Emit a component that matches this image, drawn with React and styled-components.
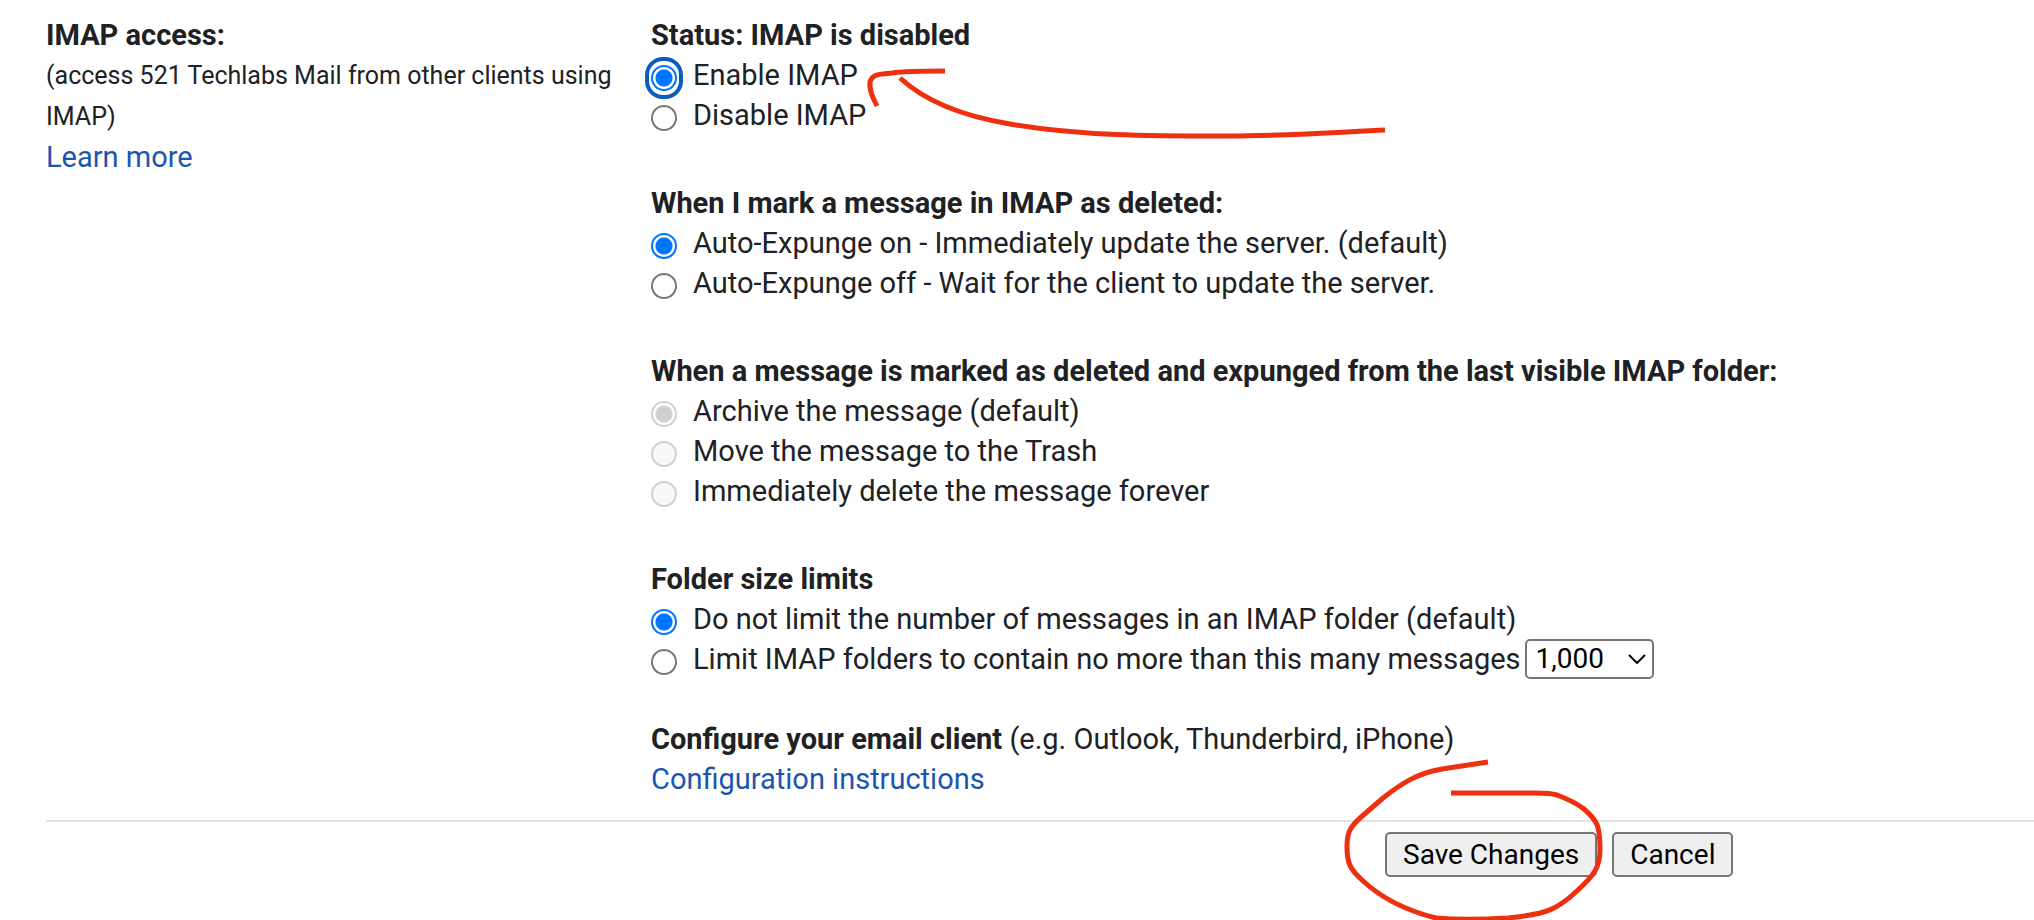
import React, { useState } from 'react';
import styled, { createGlobalStyle } from 'styled-components';

const Option = ({ name, value, selected, onSelect, disabled, autoFocus, children }) => (
  <Row>
    <label>
      <Radio
        type='radio'
        name={name}
        value={value}
        checked={selected === value}
        onChange={() => onSelect && onSelect(value)}
        disabled={disabled}
        autoFocus={autoFocus}
      />
      {children}
    </label>
  </Row>
)

const App = () => {

  const [access, setAccess] = useState('enable');
  const [expunge, setExpunge] = useState('on');
  const [limit, setLimit] = useState('none');

  return (
    <Page>
      <GlobalStyle />
      <Settings>
        <Side>
          <Title>IMAP access:</Title>
          <Hint>(access 521 Techlabs Mail from other clients using IMAP)</Hint>
          <Link href='#learn-more'>Learn more</Link>
        </Side>
        <Main>
          <Group>
            <Title>Status: IMAP is disabled</Title>
            <Option name='access' value='enable' selected={access} onSelect={setAccess} autoFocus>Enable IMAP</Option>
            <Option name='access' value='disable' selected={access} onSelect={setAccess}>Disable IMAP</Option>
            <Arrow viewBox='860 60 540 90' width='540' height='90' aria-hidden='true'>
              <path d='M945 71 C925 71 906 71 892 73 C880 74 872 74 870 82 C869 90 873 98 877 106' />
              <path d='M900 78 C926 102 962 116 1010 124 C1080 136 1150 136 1227 136 C1290 136 1340 132 1385 130' />
            </Arrow>
          </Group>
          <Group>
            <Title>When I mark a message in IMAP as deleted:</Title>
            <Option name='expunge' value='on' selected={expunge} onSelect={setExpunge}>
              Auto-Expunge on - Immediately update the server. (default)
            </Option>
            <Option name='expunge' value='off' selected={expunge} onSelect={setExpunge}>
              Auto-Expunge off - Wait for the client to update the server.
            </Option>
          </Group>
          <Group>
            <Title>When a message is marked as deleted and expunged from the last visible IMAP folder:</Title>
            <Option name='removed' value='archive' selected='archive' disabled>Archive the message (default)</Option>
            <Option name='removed' value='trash' selected='archive' disabled>Move the message to the Trash</Option>
            <Option name='removed' value='delete' selected='archive' disabled>Immediately delete the message forever</Option>
          </Group>
          <Group $last>
            <Title>Folder size limits</Title>
            <Option name='limit' value='none' selected={limit} onSelect={setLimit}>
              Do not limit the number of messages in an IMAP folder (default)
            </Option>
            <Row>
              <label>
                <Radio
                  type='radio'
                  name='limit'
                  value='max'
                  checked={limit === 'max'}
                  onChange={() => setLimit('max')}
                />
                Limit IMAP folders to contain no more than this many messages
              </label>
              <SelectWrap>
                <Select defaultValue='1,000' aria-label='Maximum messages'>
                  <option>1,000</option>
                  <option>2,000</option>
                  <option>5,000</option>
                  <option>10,000</option>
                </Select>
                <Chevron viewBox='0 0 18 10' width='18' height='10' aria-hidden='true'>
                  <path d='M1 1 L9 9 L17 1' />
                </Chevron>
              </SelectWrap>
            </Row>
          </Group>
          <Text><b>Configure your email client</b> (e.g. Outlook, Thunderbird, iPhone)</Text>
          <Link href='#configuration'>Configuration instructions</Link>
        </Main>
      </Settings>
      <Footer>
        <SaveWrap>
          <Button type='button'>Save Changes</Button>
          <Circle viewBox='1335 753 280 180' width='280' height='180' aria-hidden='true'>
            <path d='M1488 763 L1442 770 C1418 774 1402 784 1383 799 L1360 819 C1349 829 1347 835 1347 848 C1347 864 1350 870 1362 881 C1382 900 1408 912 1436 919 C1460 921 1490 920 1508 919 C1548 915 1558 910 1578 891 C1593 877 1600 869 1600 851 C1600 828 1598 822 1584 810 C1575 803 1565 799 1557 796 C1550 794 1546 794 1536 794 L1451 794' />
          </Circle>
        </SaveWrap>
        <Button type='button'>Cancel</Button>
      </Footer>
    </Page>
  )
}
export default App;

const GlobalStyle = createGlobalStyle`
  *, *::before {
    box-sizing: border-box;
  }
  body {
    margin: 0;
    background: #fff;
    color: #202124;
    font-family: Roboto, 'Liberation Sans', sans-serif;
    font-size: 29px;
    line-height: 40px;
  }
`
const Page = styled.div`
  position: relative;
  overflow: hidden;
  min-height: 100vh;
  padding: 15px 0 40px 46px;
`
const Settings = styled.div`
  display: grid;
  grid-template-columns: 605px 1fr;
  padding-bottom: 21px;
  border-bottom: 2px solid #e3e3e3;
`
const Side = styled.div`
  padding-right: 24px;
`
const Main = styled.div`
  min-width: 0;
`
const Group = styled.div`
  position: relative;
  margin-bottom: ${props => props.$last ? '40px' : '48px'};
`
const Title = styled.div`
  font-weight: 700;
`
const Hint = styled.div`
  font-size: 25px;
  line-height: 41px;
`
const Text = styled.div`
  b {
    font-weight: 700;
  }
`
const Link = styled.a`
  color: #1a56b0;
  text-decoration: none;
`
const Row = styled.div`
  display: flex;
  align-items: center;
  label {
    display: flex;
    align-items: center;
  }
`
const Radio = styled.input`
  appearance: none;
  display: flex;
  align-items: center;
  justify-content: center;
  flex-shrink: 0;
  width: 26px;
  height: 30px;
  margin: 6px 16px 0 0;
  border-radius: 12px;
  color: #767676;

  &::before {
    content: '';
    width: 26px;
    height: 26px;
    border: 2px solid currentColor;
    border-radius: 50%;
    background: #fff;
  }
  &:checked {
    color: #0075ff;
  }
  &:checked::before {
    background: radial-gradient(circle, currentColor 8px, #fff 9px);
  }
  &:disabled {
    color: #d0d0d0;
  }
  &:disabled::before {
    background-color: #f8f8f8;
  }
  &:focus {
    outline: 4px solid #0b5cbd;
    outline-offset: 2px;
  }
`
const SelectWrap = styled.div`
  position: relative;
  margin-left: 4px;
`
const Select = styled.select`
  appearance: none;
  display: block;
  width: 129px;
  height: 40px;
  padding: 0 0 0 9px;
  border: 2px solid #767676;
  border-radius: 5px;
  background: #fff;
  color: #000;
  font: inherit;
  font-size: 28px;
  line-height: 36px;
`
const Chevron = styled.svg`
  position: absolute;
  right: 8px;
  top: 15px;
  fill: none;
  stroke: #000;
  stroke-width: 2;
  pointer-events: none;
`
const Footer = styled.div`
  display: flex;
  gap: 15px;
  padding: 10px 0 0 1339px;
`
const Button = styled.button`
  height: 45px;
  padding: 0 16px;
  border: 2px solid #767676;
  border-radius: 5px;
  background: #efefef;
  color: #000;
  font: inherit;
  font-size: 28px;
  line-height: 38px;
  white-space: nowrap;
`
const SaveWrap = styled.div`
  position: relative;
  display: flex;
`
const Marker = styled.svg`
  position: absolute;
  fill: none;
  stroke: #ee2f10;
  stroke-width: 5;
  stroke-linejoin: round;
  pointer-events: none;
`
const Arrow = styled(Marker)`
  left: 209px;
  top: 45px;
`
const Circle = styled(Marker)`
  left: -50px;
  top: -80px;
`
